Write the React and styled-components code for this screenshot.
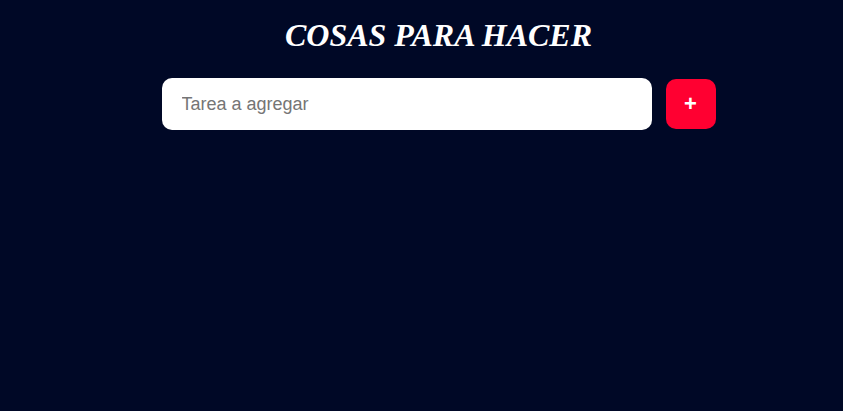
import React, { useState } from 'react'
import styled, { createGlobalStyle } from 'styled-components'

const GlobalStyle = createGlobalStyle`
  html, body {
    margin: 0;
    padding: 0;
    background: #000826;
    height: 100%;
  }
`

const Page = styled.div`
  min-height: 411px;
  display: flex;
  flex-direction: column;
  align-items: center;
  padding-left: 34px;
  box-sizing: border-box;
`

const Title = styled.h1`
  margin: 17px 0 0;
  font-family: "Liberation Serif", "Times New Roman", serif;
  font-style: italic;
  font-weight: bold;
  font-size: 32px;
  line-height: 37px;
  color: #ffffff;
`

const Form = styled.form`
  display: flex;
  align-items: center;
  gap: 14px;
  margin-top: 24px;
`

const Input = styled.input`
  width: 490px;
  height: 52px;
  box-sizing: border-box;
  border: none;
  border-radius: 10px;
  padding: 0 20px;
  font-family: "Liberation Sans", Arial, sans-serif;
  font-size: 18px;
  color: #333;
  background: #fff;
  outline: none;
  &::placeholder {
    color: #757575;
  }
`

const AddButton = styled.button`
  width: 50px;
  height: 50px;
  border: none;
  border-radius: 10px;
  background: #ff0031;
  color: #fff;
  font-family: "Liberation Sans", Arial, sans-serif;
  font-weight: bold;
  font-size: 22px;
  line-height: 1;
  cursor: pointer;
  display: flex;
  align-items: center;
  justify-content: center;
  padding: 0;
`

export default function App () {
  const [task, setTask] = useState('')
  return (
    <>
      <GlobalStyle />
      <Page>
        <Title>COSAS PARA HACER</Title>
        <Form onSubmit={e => e.preventDefault()}>
          <Input
            placeholder="Tarea a agregar"
            value={task}
            onChange={e => setTask(e.target.value)}
          />
          <AddButton type="submit">+</AddButton>
        </Form>
      </Page>
    </>
  )
}
